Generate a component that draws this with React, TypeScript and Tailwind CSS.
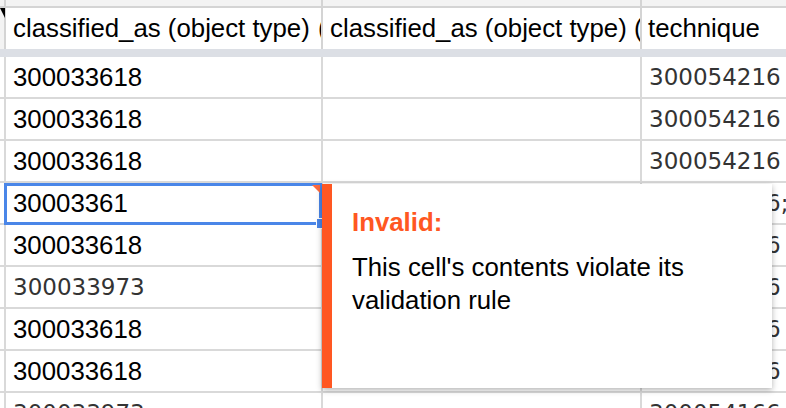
import React from 'react';

type Cell = { text: string; alt?: boolean };

const rows: Cell[][] = [
  [{ text: '300033618' }, { text: '' }, { text: '300054216', alt: true }],
  [{ text: '300033618' }, { text: '' }, { text: '300054216', alt: true }],
  [{ text: '300033618' }, { text: '' }, { text: '300054216', alt: true }],
  [{ text: '30003361' }, { text: '' }, { text: '300054216;300054216', alt: true }],
  [{ text: '300033618' }, { text: '' }, { text: '300054216', alt: true }],
  [{ text: '300033973', alt: true }, { text: '' }, { text: '300054216', alt: true }],
  [{ text: '300033618' }, { text: '' }, { text: '300054216', alt: true }],
  [{ text: '300033618' }, { text: '' }, { text: '300054216', alt: true }],
  [{ text: '300033973', alt: true }, { text: '' }, { text: '300054166', alt: true }],
];

const arial = "font-['Liberation_Sans',Arial,sans-serif] text-[25.8px] text-black";
const verdana = "font-['DejaVu_Sans',Verdana,sans-serif] text-[23px] text-[#333]";

function CellText({ cell }: { cell: Cell }) {
  return (
    <span className={`whitespace-nowrap ${cell.alt ? verdana : arial}`}>{cell.text}</span>
  );
}

export default function App() {
  return (
    <div className="relative w-[786px] h-[408px] overflow-hidden bg-white">
      {/* column header strip */}
      <div className="grid grid-cols-[6px_317px_319px_1fr] h-[8px] bg-[#f3f3f3] border-b-2 border-[#d4d4d4]">
        <div className="border-r-2 border-[#d4d4d4]" />
        <div className="border-r-2 border-[#d4d4d4]" />
        <div className="border-r-2 border-[#d4d4d4]" />
        <div />
      </div>

      {/* frozen header row */}
      <div className="grid grid-cols-[6px_317px_319px_1fr] h-[41px]">
        <div className="relative border-r-2 border-[#d4d4d4] bg-[#f3f3f3]">
          <svg className="absolute left-0 top-0" width="5" height="10" viewBox="0 0 5 10">
            <polygon points="0,0 5,0 5,10" fill="#000" />
          </svg>
        </div>
        <div className="flex items-center pl-[7px] overflow-hidden border-r-2 border-[#d4d4d4]">
          <span className={`whitespace-nowrap ${arial} text-[25.3px]`}>
            classified_as (object type) <span className="ml-[1px]">(AAT)</span>
          </span>
        </div>
        <div className="flex items-center pl-[7px] overflow-hidden border-r-2 border-[#d4d4d4]">
          <span className={`whitespace-nowrap ${arial} text-[25.3px]`}>classified_as (object type) (AAT)</span>
        </div>
        <div className="flex items-center pl-[6px] overflow-hidden">
          <span className={`whitespace-nowrap ${arial} text-[25.3px]`}>technique</span>
        </div>
      </div>

      {/* freeze divider */}
      <div className="h-[8px] bg-[#dcdfe5]" />

      {/* data rows */}
      {rows.map((row, i) => (
        <div key={i} className="grid grid-cols-[6px_317px_319px_1fr] h-[42px] border-b-2 border-[#d9d9d9]">
          <div className="border-r-2 border-[#d9d9d9]" />
          <div className="flex items-center pl-[7px] overflow-hidden border-r-2 border-[#d9d9d9]">
            <CellText cell={row[0]} />
          </div>
          <div className="flex items-center pl-[7px] overflow-hidden border-r-2 border-[#d9d9d9]">
            <CellText cell={row[1]} />
          </div>
          <div className="flex items-center pl-[7px] overflow-hidden">
            <CellText cell={row[2]} />
          </div>
        </div>
      ))}

      {/* selection on the invalid cell */}
      <div className="absolute left-[4px] top-[183px] w-[318px] h-[42px] border-[3px] border-[#4a86e8]" />
      <div className="absolute left-[312px] top-[185px] w-0 h-0 border-l-[8px] border-l-transparent border-t-[8px] border-t-[#ff6a3d]" />
      <div className="absolute left-[316px] top-[218px] w-[10px] h-[11px] bg-[#4a86e8] border border-white" />

      {/* validation popup */}
      <div className="absolute left-[322px] top-[184px] w-[450px] h-[204px] flex bg-white shadow-[0_2px_6px_rgba(0,0,0,0.3)]">
        <div className="w-[10px] bg-[#ff5722]" />
        <div className="flex-1 pl-[20px] pr-[30px] pt-[22px] font-['Liberation_Sans',Arial,sans-serif] text-[25.8px] leading-[33px]">
          <div className="font-bold text-[#ff5722]">Invalid:</div>
          <div className="mt-[12px] text-black">This cell's contents violate its validation rule</div>
        </div>
      </div>
    </div>
  );
}
